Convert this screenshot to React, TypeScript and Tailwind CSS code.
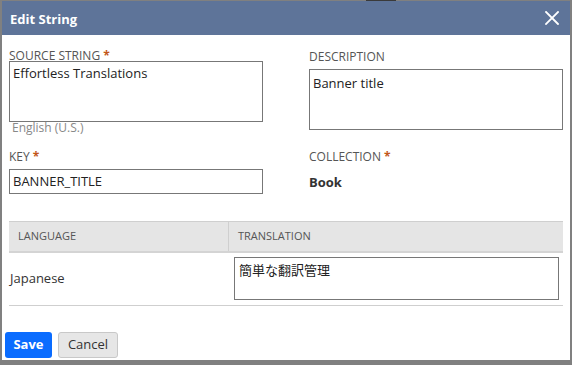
import React from 'react';

function Required() {
  return <span className="text-[#c2571a] font-bold ml-[3px]">*</span>;
}

function App() {
  return (
    <div className="w-[572px] h-[365px] bg-[#808080] overflow-hidden" style={{ fontFamily: '"Open Sans", "Noto Sans CJK JP", sans-serif' }}>
      <div className="h-[1px] flex">
        <div className="ml-[366px] w-[30px] h-[1px] bg-[#3a3a3a]" />
      </div>
      <div className="ml-[2px] w-[568px] h-[359px] bg-white flex flex-col">
        <div className="h-[34px] bg-[#5e7499] flex items-center justify-between pl-[8px] pr-[11px]">
          <span className="text-white font-bold text-[13px] leading-[20px] pt-[1px]">Edit String</span>
          <svg width="14" height="14" viewBox="0 0 14 14" className="text-white">
            <path d="M1 1L13 13M13 1L1 13" stroke="currentColor" strokeWidth="1.8" strokeLinecap="square" />
          </svg>
        </div>

        <div className="px-[7px] pt-[13px]">
          <div className="grid grid-cols-[254px_254px] gap-x-[46px] items-start">
            <div>
              <div className="h-[13px] text-[12px] leading-[16px] text-[#555] uppercase whitespace-nowrap">
                Source String<Required />
              </div>
              <div className="h-[61px] border border-[#777] px-[3px] pt-[2px] text-[13px] leading-[18px] text-[#222]">
                Effortless Translations
              </div>
              <div className="-mt-[2px] pl-[3px] text-[12px] leading-[16px] text-[#888]">English (U.S.)</div>
            </div>
            <div className="pt-[1px]">
              <div className="h-[20px] text-[12px] leading-[16px] text-[#555] uppercase">Description</div>
              <div className="h-[61px] border border-[#777] px-[3px] pt-[4px] text-[13px] leading-[18px] text-[#222]">
                Banner title
              </div>
            </div>

            <div className="mt-[13px]">
              <div className="h-[20px] text-[12px] leading-[16px] text-[#555] uppercase">
                Key<Required />
              </div>
              <div className="h-[25px] border border-[#777] px-[3px] flex items-center text-[13px] text-[#222]">
                BANNER_TITLE
              </div>
            </div>
            <div className="mt-[13px]">
              <div className="h-[24px] text-[12px] leading-[16px] text-[#555] uppercase">
                Collection<Required />
              </div>
              <div className="text-[13px] leading-[18px] font-bold text-[#333]">Book</div>
            </div>
          </div>

          <div className="mt-[27px]">
            <div className="grid grid-cols-[220px_1fr] h-[32px] bg-[#e5e5e5] border-t border-[#cfcfcf] border-b-2 border-b-[#d4d4d4] text-[11px] text-[#555] uppercase">
              <div className="flex items-center pl-[9px] border-r border-[#cfcfcf]">Language</div>
              <div className="flex items-center pl-[9px]">Translation</div>
            </div>
            <div className="grid grid-cols-[220px_1fr] h-[53px] border-b border-[#cfcfcf]">
              <div className="flex items-center pl-[1px] text-[13px] text-[#333]">Japanese</div>
              <div className="pl-[5px] pr-[4px] pt-[4px]">
                <div className="h-[43px] border border-[#777] px-[4px] pt-[3px] text-[13px] leading-[18px] text-[#222]">
                  簡単な翻訳管理
                </div>
              </div>
            </div>
          </div>
        </div>

        <div className="mt-[26px] pl-[3px] flex gap-[6px]">
          <button className="h-[26px] w-[47px] rounded-[3px] bg-[#0a6cff] text-white font-bold text-[13px]">Save</button>
          <button className="h-[26px] w-[60px] rounded-[3px] bg-[#e6e6e6] border border-[#c8c8c8] text-[#333] text-[13px]">Cancel</button>
        </div>
      </div>
    </div>
  );
}

export default App;
